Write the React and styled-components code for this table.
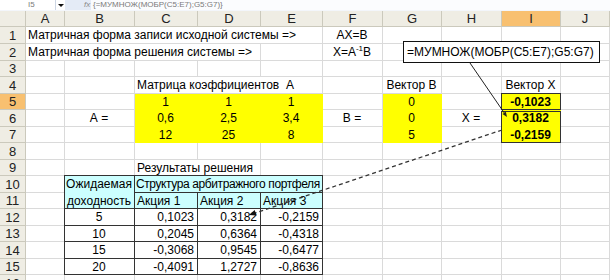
import React from 'react';
import styled, { createGlobalStyle } from 'styled-components';

const GlobalStyle = createGlobalStyle`
  html, body {
    margin: 0;
    padding: 0;
    background: #fff;
  }
  body {
    font-family: "Liberation Sans", Arial, sans-serif;
  }
`;

const COLS = ['A', 'B', 'C', 'D', 'E', 'F', 'G', 'H', 'I', 'J'];
const COL_W = [39, 70, 63, 63, 62, 60, 59, 60, 59, 49];
const ROW_H = [17, 17, 16, 17, 16, 17, 16, 17, 16, 17, 16, 17, 16, 17, 16, 17];

const YELLOW = '#ffff00';
const CYAN = '#ccffff';

// содержимое ячеек листа
const cells = {
  A1: { v: 'Матричная форма записи исходной системы =>', span: 5 },
  F1: { v: 'AX=B', align: 'center' },
  A2: { v: 'Матричная форма решения системы =>', span: 4 },
  F2: { v: <>X=A<sup>-1</sup>B</>, align: 'center' },
  C4: { v: 'Матрица коэффициентов  А', span: 3 },
  G4: { v: 'Вектор В', align: 'center' },
  I4: { v: 'Вектор Х', align: 'center' },
  B6: { v: 'А =', align: 'center' },
  F6: { v: 'В =', align: 'center' },
  H6: { v: 'Х =', align: 'center' },
  C9: { v: 'Результаты решения', span: 2 },
};

const matrixA = [
  ['1', '1', '1'],
  ['0,6', '2,5', '3,4'],
  ['12', '25', '8'],
];
const vectorB = ['0', '0', '5'];
const vectorX = ['-0,1023', '0,3182', '-0,2159'];

matrixA.forEach((row, i) => {
  row.forEach((v, j) => {
    cells[`${COLS[2 + j]}${5 + i}`] = { v, align: 'center', fill: YELLOW };
  });
  cells[`G${5 + i}`] = { v: vectorB[i], align: 'center', fill: YELLOW };
});

cells.I5 = { v: vectorX[0], align: 'center', fill: YELLOW, bold: true, edges: 'trbl' };
cells.I6 = { v: vectorX[1], align: 'center', fill: YELLOW, bold: true, edges: 'Trl' };
cells.I7 = { v: vectorX[2], align: 'center', fill: YELLOW, bold: true, edges: 'rbl' };

// таблица результатов B10:E15
const results = [
  ['5', '0,1023', '0,3182', '-0,2159'],
  ['10', '0,2045', '0,6364', '-0,4318'],
  ['15', '-0,3068', '0,9545', '-0,6477'],
  ['20', '-0,4091', '1,2727', '-0,8636'],
];

cells.B10 = { v: 'Ожидаемая', align: 'center', fill: CYAN, edges: 'trl' };
cells.B11 = { v: 'доходность', align: 'center', fill: CYAN, edges: 'rbl' };
cells.C10 = {
  v: 'Структура арбитражного портфеля',
  span: 3,
  fill: CYAN,
  edges: 'trbl',
  tight: true,
};
['C', 'D', 'E'].forEach((c, j) => {
  cells[`${c}11`] = { v: `Акция ${j + 1}`, fill: CYAN, edges: 'trbl' };
});
results.forEach((row, i) => {
  row.forEach((v, j) => {
    cells[`${COLS[1 + j]}${12 + i}`] = {
      v,
      align: j === 0 ? 'center' : 'right',
      edges: 'trbl',
    };
  });
});

const Page = styled.div`
  position: relative;
  width: 610px;
  height: 280px;
  overflow: hidden;
  background: #fff;
`;

const FormulaBar = styled.div`
  display: flex;
  height: 11px;
  box-sizing: border-box;
  background: #e4ebf6;
  border-bottom: 1px solid #f3f6fb;
  font-size: 8px;
  line-height: 8px;
  color: #7a7a7a;
  overflow: hidden;
`;

const NameBox = styled.div`
  width: 55px;
  box-sizing: border-box;
  padding: 1px 0 0 28px;
  background: #fff;
`;

const DropButton = styled.div`
  width: 9px;
  display: flex;
  align-items: center;
  justify-content: center;
  background: #fff;
  border-left: 1px solid #cdd6e4;

  &::before {
    content: '';
    border-left: 3px solid transparent;
    border-right: 3px solid transparent;
    border-top: 3px solid #111;
  }
`;

const FxLabel = styled.div`
  width: 26px;
  box-sizing: border-box;
  padding: 1px 0 0 19px;
  font-style: italic;
  color: #8a8a8a;
`;

const FormulaText = styled.div`
  flex: 1;
  padding: 1px 0 0 2px;
  background: #fbfcfe;
  white-space: nowrap;
`;

const Sheet = styled.div`
  display: grid;
  grid-template-columns: 26px ${COL_W.map((w) => `${w}px`).join(' ')};
  grid-template-rows: 16px ${ROW_H.map((h) => `${h}px`).join(' ')};
`;

const Header = styled.div`
  display: flex;
  align-items: center;
  justify-content: center;
  box-sizing: border-box;
  background: ${({ $active }) => ($active ? '#f8c070' : '#efede4')};
  border-right: 1px solid #cbc9bc;
  border-bottom: 1px solid #cbc9bc;
  font-size: 13px;
  color: #222;
`;

const edge = (edges, key) => (edges.includes(key) ? '1px solid #333' : '0');

const Cell = styled.div`
  position: relative;
  display: flex;
  align-items: center;
  justify-content: ${({ $align }) =>
    $align === 'center' ? 'center' : $align === 'right' ? 'flex-end' : 'flex-start'};
  grid-column: span ${({ $span }) => $span};
  box-sizing: border-box;
  padding: 0 3px 0 ${({ $tight }) => ($tight ? '1px' : '2px')};
  background: ${({ $fill }) => $fill || '#fff'};
  border-right: 1px solid ${({ $fill }) => $fill || '#dadada'};
  border-bottom: 1px solid ${({ $fill }) => $fill || '#dadada'};
  font-size: 12px;
  letter-spacing: ${({ $tight }) => ($tight ? '-0.4px' : '0')};
  font-weight: ${({ $bold }) => ($bold ? 700 : 400)};
  color: #000;
  white-space: pre;

  &::after {
    content: '';
    position: absolute;
    top: ${({ $edges }) => ($edges.includes('T') ? '1px' : '-1px')};
    left: -1px;
    right: -1px;
    bottom: -1px;
    pointer-events: none;
    border-top: ${({ $edges }) => edge($edges.toLowerCase(), 't')};
    border-right: ${({ $edges }) => edge($edges, 'r')};
    border-bottom: ${({ $edges }) => edge($edges, 'b')};
    border-left: ${({ $edges }) => edge($edges, 'l')};
  }
`;

const CellText = styled.span`
  line-height: 14px;

  sup {
    font-size: 8px;
    line-height: 8px;
    vertical-align: 5px;
  }
`;

const Callout = styled.div`
  position: absolute;
  left: 403px;
  top: 41px;
  width: 197px;
  height: 22px;
  box-sizing: border-box;
  display: flex;
  align-items: center;
  padding-left: 3px;
  background: #fff;
  border: 1px solid #111;
  font-size: 12px;
  white-space: nowrap;
`;

const Arrows = styled.svg`
  position: absolute;
  left: 0;
  top: 0;
  pointer-events: none;
`;

function buildRow(r) {
  const out = [
    <Header key={`h${r}`} $active={r === 5}>
      {r}
    </Header>,
  ];
  let skip = 0;
  COLS.forEach((c) => {
    if (skip > 0) {
      skip -= 1;
      return;
    }
    const cell = cells[`${c}${r}`] || {};
    const span = cell.span || 1;
    skip = span - 1;
    out.push(
      <Cell
        key={`${c}${r}`}
        $span={span}
        $align={cell.align}
        $fill={cell.fill}
        $bold={cell.bold}
        $tight={cell.tight}
        $edges={cell.edges || ''}
      >
        {cell.v && <CellText>{cell.v}</CellText>}
      </Cell>
    );
  });
  return out;
}

function arrowHead(tip, from, len = 7, half = 3) {
  const dx = tip[0] - from[0];
  const dy = tip[1] - from[1];
  const l = Math.hypot(dx, dy);
  const ux = dx / l;
  const uy = dy / l;
  const bx = tip[0] - ux * len;
  const by = tip[1] - uy * len;
  return `${tip[0]},${tip[1]} ${bx - uy * half},${by + ux * half} ${bx + uy * half},${by - ux * half}`;
}

export default function App() {
  const rows = ROW_H.map((_, i) => i + 1);

  return (
    <Page>
      <GlobalStyle />
      <FormulaBar>
        <NameBox>I5</NameBox>
        <DropButton />
        <FxLabel>fx</FxLabel>
        <FormulaText>{'{=МУМНОЖ(МОБР(C5:E7);G5:G7)}'}</FormulaText>
      </FormulaBar>

      <Sheet>
        <Header />
        {COLS.map((c) => (
          <Header key={c} $active={c === 'I'}>
            {c}
          </Header>
        ))}
        {rows.map((r) => buildRow(r))}
      </Sheet>

      <Callout>=МУМНОЖ(МОБР(C5:E7);G5:G7)</Callout>

      <Arrows width="610" height="280" viewBox="0 0 610 280">
        <line x1="470" y1="63" x2="505" y2="114" stroke="#222" strokeWidth="1" />
        <polygon points={arrowHead([507, 117], [470, 63], 5, 2)} fill="#222" />
        <line
          x1="502"
          y1="130"
          x2="255"
          y2="213"
          stroke="#333"
          strokeWidth="1.3"
          strokeDasharray="4 3"
        />
        <polygon points={arrowHead([249, 215], [502, 130])} fill="#111" />
      </Arrows>
    </Page>
  );
}
